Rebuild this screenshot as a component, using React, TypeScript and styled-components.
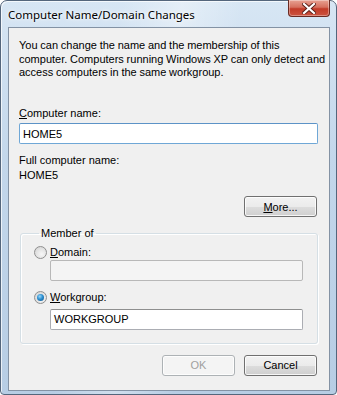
import { FC, ReactNode } from "react";
import styled, { createGlobalStyle, css } from "styled-components";

const GlobalStyle = createGlobalStyle`
    html, body {
        margin: 0;
        padding: 0;
        background: #ffffff;
    }
    body {
        font-family: "Liberation Sans", Arial, sans-serif;
        font-size: 11px;
        color: #000;
    }
`;

const Window = styled.div`
    box-sizing: border-box;
    width: 337px;
    height: 395px;
    display: flex;
    flex-direction: column;
    padding: 0 6px 3px 7px;
    border: 1px solid #54667c;
    border-radius: 7px 7px 4px 4px;
    background:
        linear-gradient(100deg, rgba(255, 255, 255, 0) 30%, rgba(255, 255, 255, 0.35) 45%, rgba(255, 255, 255, 0) 60%),
        linear-gradient(to bottom, #d7e6f4 0%, #c3d7eb 40%, #b7cde4 100%);
    box-shadow: inset 1px 1px 0 rgba(255, 255, 255, 0.7);
`;

const TitleBar = styled.div`
    height: 26px;
    display: flex;
    justify-content: space-between;
    align-items: flex-start;
`;

const Title = styled.div`
    margin-top: 6px;
    font-family: "Noto Sans", "Open Sans", sans-serif;
    font-size: 11.5px;
    color: #000;
    text-shadow: 0 0 6px #fff, 0 0 3px #fff;
`;

const CloseButton = styled.div`
    width: 42px;
    height: 17px;
    margin: -1px 0 0 0;
    box-sizing: border-box;
    display: flex;
    align-items: center;
    justify-content: center;
    border: 1px solid #6a2a22;
    border-top: none;
    border-radius: 0 0 4px 4px;
    background: linear-gradient(to bottom, #e8a293 0%, #d6705e 45%, #c23b28 55%, #cc5440 100%);
    box-shadow: inset 0 0 0 1px rgba(255, 255, 255, 0.35);
`;

const Client = styled.div`
    flex: 1;
    display: flex;
    flex-direction: column;
    padding: 11px 11px 0 10px;
    border: 1px solid #8392a4;
    background: #f0f0f0;
`;

const Text = styled.p<{ $gap?: number }>`
    margin: ${(p) => p.$gap ?? 0}px 0 0 0;
    line-height: 13.5px;
`;

const Intro = styled(Text)`
    white-space: nowrap;
    word-spacing: -0.3px;
`;

const Key = styled.span`
    text-decoration: underline;
`;

const Field = styled.div<{ $gap?: number; $disabled?: boolean; $focus?: boolean }>`
    box-sizing: border-box;
    height: 21px;
    margin-top: ${(p) => p.$gap ?? 0}px;
    padding: 0 3px;
    display: flex;
    align-items: center;
    border: 1px solid #abadb3;
    border-top-color: #8e8f8f;
    background: #fff;
    border-radius: 2px;
    ${(p) =>
        p.$focus &&
        css`
            border-color: #6fa7d6;
            border-top-color: #5c93c7;
        `}
    ${(p) =>
        p.$disabled &&
        css`
            background: #f4f4f4;
            border-color: #b8b8b8;
        `}
`;

const Button = styled.div<{ $disabled?: boolean; $gap?: number }>`
    box-sizing: border-box;
    width: 73px;
    height: 21px;
    margin-top: ${(p) => p.$gap ?? 0}px;
    display: flex;
    align-items: center;
    justify-content: center;
    border: 1px solid #707070;
    border-radius: 3px;
    background: linear-gradient(to bottom, #f2f2f2 0%, #ebebeb 50%, #dddddd 51%, #cfcfcf 100%);
    box-shadow: inset 0 0 0 1px rgba(255, 255, 255, 0.8);
    color: #000;
    ${(p) =>
        p.$disabled &&
        css`
            border-color: #adb2b5;
            background: #f4f4f4;
            color: #a0a0a0;
        `}
`;

const ButtonRow = styled.div<{ $gap?: number }>`
    display: flex;
    justify-content: flex-end;
    gap: 9px;
    margin-top: ${(p) => p.$gap ?? 0}px;
    padding-right: 1px;
`;

const Group = styled.fieldset`
    margin: 10px 0 0 1px;
    padding: 0 14px 13px 13px;
    border: 1px solid #d5dfe5;
    border-radius: 3px;
    box-shadow: inset 1px 1px 0 #fff, 1px 1px 0 #fff;
    min-width: 0;
`;

const Legend = styled.legend`
    margin-left: 5px;
    padding: 0 2px;
    line-height: 13.5px;
`;

const RadioRow = styled.label<{ $gap?: number }>`
    display: flex;
    align-items: center;
    gap: 3px;
    margin-top: ${(p) => p.$gap ?? 0}px;
    line-height: 13.5px;
`;

const RadioDot = styled.span<{ $checked?: boolean }>`
    box-sizing: border-box;
    width: 13px;
    height: 13px;
    border-radius: 50%;
    border: 1px solid #8f8f8f;
    background: radial-gradient(circle at 60% 65%, #f7f7f7 0%, #e4e4e4 50%, #cfcfcf 100%);
    display: flex;
    align-items: center;
    justify-content: center;
    &::after {
        content: "";
        display: ${(p) => (p.$checked ? "block" : "none")};
        width: 7px;
        height: 7px;
        border-radius: 50%;
        background: radial-gradient(circle at 40% 35%, #9ad8fa 0%, #2c8fd0 45%, #0e4f85 100%);
    }
`;

const Indented = styled.div`
    margin-left: 16px;
`;

const Radio: FC<{ checked?: boolean; gap?: number; children: ReactNode }> = ({ checked, gap, children }) => (
    <RadioRow $gap={gap}>
        <RadioDot $checked={checked} />
        <span>{children}</span>
    </RadioRow>
);

const CloseGlyph = () => (
    <svg width="14" height="11" viewBox="0 0 14 11">
        <path d="M2 1 L12 10 M12 1 L2 10" stroke="#5a1f17" strokeWidth="4" strokeLinecap="square" />
        <path d="M2 1 L12 10 M12 1 L2 10" stroke="#ffffff" strokeWidth="2.2" strokeLinecap="square" />
    </svg>
);

export default function App() {
    return (
        <>
            <GlobalStyle />
            <Window>
                <TitleBar>
                    <Title>Computer Name/Domain Changes</Title>
                    <CloseButton>
                        <CloseGlyph />
                    </CloseButton>
                </TitleBar>
                <Client>
                    <Intro>
                        You can change the name and the membership of this
                        <br />
                        computer. Computers running Windows XP can only detect and
                        <br />
                        access computers in the same workgroup.
                    </Intro>
                    <Text $gap={27}>
                        <Key>C</Key>omputer name:
                    </Text>
                    <Field $gap={3} $focus>
                        HOME5
                    </Field>
                    <Text $gap={10}>Full computer name:</Text>
                    <Text $gap={1}>HOME5</Text>
                    <ButtonRow $gap={14}>
                        <Button>
                            <span>
                                <Key>M</Key>ore...
                            </span>
                        </Button>
                    </ButtonRow>
                    <Group>
                        <Legend>Member of</Legend>
                        <Radio gap={5}>
                            <Key>D</Key>omain:
                        </Radio>
                        <Indented>
                            <Field $gap={1} $disabled />
                        </Indented>
                        <Radio checked gap={10}>
                            <Key>W</Key>orkgroup:
                        </Radio>
                        <Indented>
                            <Field $gap={4}>WORKGROUP</Field>
                        </Indented>
                    </Group>
                    <ButtonRow $gap={11}>
                        <Button $disabled>OK</Button>
                        <Button>Cancel</Button>
                    </ButtonRow>
                </Client>
            </Window>
        </>
    );
}
